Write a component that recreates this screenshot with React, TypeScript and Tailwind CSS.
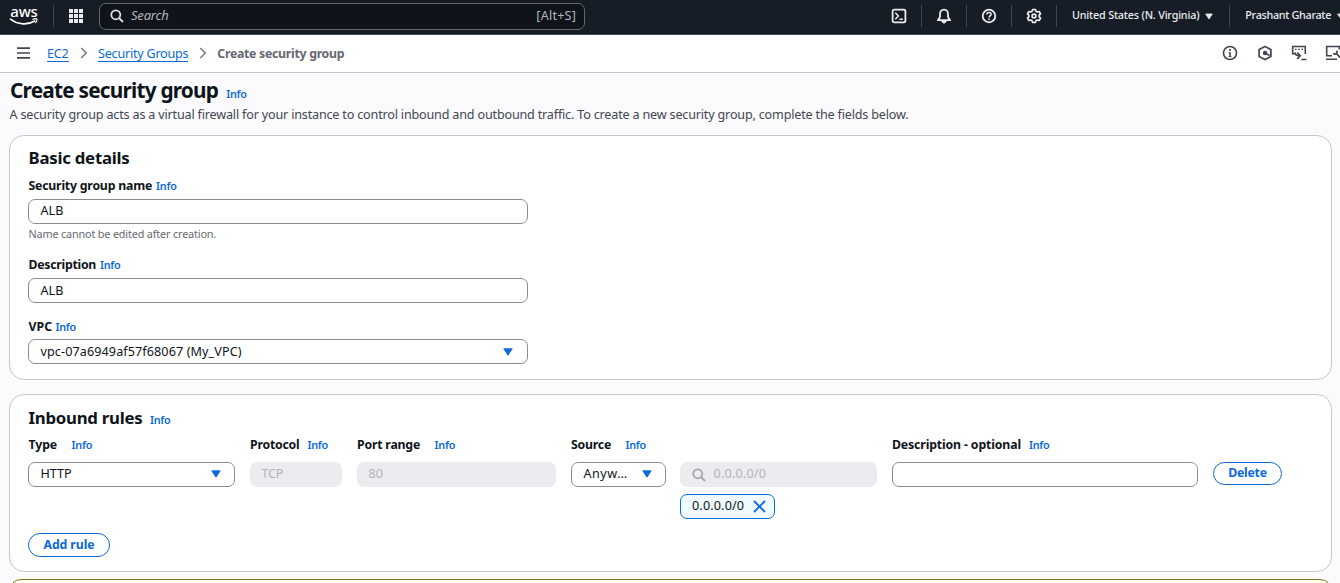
import type { ReactNode } from "react";

function Info({ className = "" }: { className?: string }) {
  return (
    <a className={`pt-px text-[10.8px] font-semibold tracking-[-0.27px] text-[#0b69d8] ${className}`}>
      Info
    </a>
  );
}

function Caret({ className = "" }: { className?: string }) {
  return (
    <svg width="10" height="8" viewBox="0 0 10 8" className={`shrink-0 ${className}`}>
      <path d="M0.8 0.8h8.4L5 7.2z" fill="currentColor" stroke="currentColor" strokeWidth="0.9" strokeLinejoin="round" />
    </svg>
  );
}

function SearchIcon({ className = "" }: { className?: string }) {
  return (
    <svg width="14" height="14" viewBox="0 0 14 14" fill="none" stroke="currentColor" strokeWidth="1.8" className={`shrink-0 ${className}`}>
      <circle cx="5.8" cy="5.8" r="4.5" />
      <path d="M9 9l4 4" />
    </svg>
  );
}

function Divider() {
  return <span className="h-[22px] w-px shrink-0 bg-[#424650]" />;
}

function NavIcon({ children }: { children: ReactNode }) {
  return (
    <span className="flex w-11 shrink-0 items-center justify-center">
      <svg width="16" height="16" viewBox="0 0 16 16" fill="none" stroke="#ebebf0" strokeWidth="1.8" strokeLinejoin="round">
        {children}
      </svg>
    </span>
  );
}

function TopBar() {
  return (
    <header className="flex h-[35px] shrink-0 items-center overflow-hidden border-b border-[#424650] bg-[#161d26] pb-[2px] text-[#ebebf0]">
      <div className="ml-[9px] flex w-[30px] shrink-0 flex-col items-center">
        <span className="h-[12px] text-[15px] leading-[11px] font-medium tracking-[-0.2px] text-white">aws</span>
        <svg width="30" height="8" viewBox="0 0 30 8" fill="none" stroke="#fff" strokeLinecap="round">
          <path d="M1.5 1.2C9 7 19 7.2 25.6 3" strokeWidth="1.7" />
          <path d="M23.8 1.2c2-.6 3.6-.6 4 0s-.2 2.2-1.3 3.5" strokeWidth="1.2" />
        </svg>
      </div>
      <span className="ml-[14px] flex"><Divider /></span>
      <svg width="14" height="14" viewBox="0 0 14 14" fill="currentColor" className="ml-[15px] shrink-0">
        {[0, 5, 10].map((y) =>
          [0, 5, 10].map((x) => <rect key={`${x}-${y}`} x={x} y={y} width="4" height="4" />)
        )}
      </svg>
      <div className="mt-px ml-4 flex h-[27px] w-[486px] shrink-0 items-center rounded-[7px] border border-[#656871] bg-[#0f141a] pr-2 pb-px pl-[10px] text-[#b4b4bb]">
        <SearchIcon className="text-[#dedee3]" />
        <span className="ml-[7px] text-[13px] tracking-[-0.2px] italic">Search</span>
        <span className="ml-auto text-[12.6px] tracking-[0.2px]">[Alt+S]</span>
      </div>
      <div className="ml-[292px] flex items-center">
        <NavIcon>
          <rect x="1.6" y="1.6" width="12.8" height="12.8" rx="1.6" />
          <path d="M4.3 4.8L7.4 8l-3.1 3.2M8.4 11.2h3.4" strokeWidth="1.5" />
        </NavIcon>
        <Divider />
        <NavIcon>
          <path d="M8 1.6c-2.6 0-4 1.9-4 4.3v3L1.9 12.2h12.2L12 8.9v-3c0-2.4-1.4-4.3-4-4.3z" />
          <path d="M5.3 13c.4 1.6 1.4 2.4 2.7 2.4s2.3-.8 2.7-2.4z" fill="#ebebf0" stroke="none" />
        </NavIcon>
        <Divider />
        <NavIcon>
          <circle cx="8" cy="8" r="6.3" />
          <path d="M5.9 6.6c0-1.3.9-2.1 2.1-2.1s2.1.8 2.1 1.9c0 1.5-2.1 1.5-2.1 3.1" strokeWidth="1.5" />
          <path d="M8 10.4v1.6" strokeWidth="1.6" />
        </NavIcon>
        <Divider />
        <NavIcon>
          <path d="M6.6 1.5h2.8l.5 1.8 1.3.7 1.9-.5 1.4 2.3L13.2 7.2v1.6l1.3 1.4-1.4 2.3-1.9-.5-1.3.7-.5 1.8H6.6l-.5-1.8-1.3-.7-1.9.5-1.4-2.3L2.8 8.8V7.2L1.5 5.8l1.4-2.3 1.9.5 1.3-.7z" strokeWidth="1.7" />
          <circle cx="8" cy="8" r="1.9" strokeWidth="1.7" />
        </NavIcon>
        <Divider />
        <span className="mb-px ml-[15px] text-[10.8px] font-medium tracking-[-0.19px] whitespace-nowrap">United States (N. Virginia)</span>
        <Caret className="ml-[6px] h-[7px] w-[8px]" />
        <span className="ml-[16px] flex"><Divider /></span>
        <span className="mb-px ml-[15px] text-[10.8px] font-medium tracking-[-0.31px] whitespace-nowrap">Prashant Gharate</span>
        <Caret className="ml-[6px] h-[7px] w-[8px]" />
      </div>
    </header>
  );
}

function Chevron() {
  return (
    <svg width="8" height="12" viewBox="0 0 8 12" fill="none" stroke="#7d8089" strokeWidth="1.7" className="shrink-0">
      <path d="M1.2 1l5 5-5 5" />
    </svg>
  );
}

function Breadcrumbs() {
  return (
    <nav className="flex h-[38px] shrink-0 items-center overflow-hidden border-b border-[#c6c6cd] bg-white pb-px text-[12.6px]">
      <svg width="13" height="12" viewBox="0 0 13 12" className="ml-[17px] shrink-0" stroke="#424650" strokeWidth="1.7">
        <path d="M0 1.2h13M0 6h13M0 10.8h13" />
      </svg>
      <a className="mt-px ml-[17px] h-[17px] border-b border-[#0b69d8] leading-[17px] tracking-[-0.2px] text-[#0b69d8]">EC2</a>
      <span className="ml-[11px] flex"><Chevron /></span>
      <a className="mt-px ml-[10.5px] h-[17px] border-b border-[#0b69d8] leading-[17px] tracking-[-0.24px] text-[#0b69d8]">Security Groups</a>
      <span className="ml-[10.5px] flex"><Chevron /></span>
      <span className="mt-[3px] ml-[10.5px] text-[12.3px] font-bold tracking-[-0.28px] text-[#656871]">Create security group</span>
      <div className="mr-[-1px] ml-auto flex shrink-0 items-center gap-[18px] text-[#424650]">
        <svg width="16" height="16" viewBox="0 0 16 16" fill="none" stroke="currentColor" strokeWidth="1.6">
          <circle cx="8" cy="8" r="6.5" />
          <path d="M8 4v2M8 7.2v4.8" strokeWidth="1.6" />
          <path d="M6.6 7.7H8M6.5 11.6h3" strokeWidth="0.9" />
        </svg>
        <svg width="16" height="16" viewBox="0 0 16 16" fill="none" stroke="currentColor" strokeWidth="1.7" className="ml-px">
          <path d="M8 1.4l5.9 3.1v7L8 14.6l-5.9-3.1v-7z" strokeLinejoin="round" />
          <circle cx="8" cy="8" r="2.2" fill="currentColor" stroke="none" />
          <path d="M8 8l4.6 2.6" />
        </svg>
        <svg width="16" height="16" viewBox="0 0 16 16" fill="none" stroke="currentColor" strokeWidth="1.6">
          <path d="M4 8.8H1.7V1.5h12.6V9M10.5 14.5H15.5" />
          <path d="M4 4.3h1.6M7.2 4.3h1.6M10.4 4.3H12" strokeWidth="1.3" />
          <path d="M4 7.5c0 2.3 1 3.2 4.8 3.2M6.2 7.5l3 3.2-3 3.2" strokeWidth="1.7" />
        </svg>
        <svg width="16" height="16" viewBox="0 0 16 16" fill="none" stroke="currentColor" strokeWidth="1.6">
          <path d="M7 10.7H1.7V1.5h12.6v3M1 14.3h11" />
          <path d="M15 12.4L11.8 9M8.3 8.4c1.8 1.5 4.2.4 3.7-2.7" strokeWidth="1.8" />
        </svg>
      </div>
    </nav>
  );
}

const field = "flex h-[25px] items-center rounded-[7px] border border-[#8c8c94] bg-white pl-[11.5px] text-[12.6px] text-[#0f141a]";
const disabled = "flex h-[25px] items-center rounded-[7px] bg-[#ebebf0] pl-[11.5px] text-[12.6px] text-[#b4b4bb]";
const label = "flex h-[18px] items-center text-[12.3px] font-bold whitespace-nowrap text-[#0f141a]";
const card = "ml-[9px] mr-2 flex shrink-0 flex-col rounded-[15px] border border-[#c6c6cd] bg-white pl-[18px]";
const button = "flex items-center justify-center rounded-full border border-[#0b69d8] text-[12.3px] font-bold text-[#0b69d8]";

function BasicDetails() {
  return (
    <section className={`${card} mt-[10px] h-[245px]`}>
      <h2 className="mt-[10px] ml-[0.5px] h-6 text-[16.8px] leading-6 font-bold tracking-[-0.24px] text-[#0f141a]">Basic details</h2>
      <div className={`${label} mt-[7px] ml-[0.5px] tracking-[-0.21px]`}>
        Security group name <Info className="ml-1" />
      </div>
      <div className={`${field} mt-1 w-[500px]`}>ALB</div>
      <p className="mt-[2px] ml-[0.5px] h-4 text-[10.8px] leading-4 tracking-[-0.146px] text-[#656871]">Name cannot be edited after creation.</p>
      <div className={`${label} mt-[14px] ml-[0.5px] tracking-[-0.27px]`}>
        Description <Info className="ml-1" />
      </div>
      <div className={`${field} mt-1 w-[500px] pt-px`}>ALB</div>
      <div className={`${label} mt-[15px] ml-[0.5px]`}>
        VPC <Info className="ml-[3.5px]" />
      </div>
      <div className={`${field} mt-[3px] w-[500px] justify-between pt-px pr-[14px]`}>
        <span className="tracking-[0.1px]">vpc-07a6949af57f68067 (My_VPC)</span>
        <Caret className="mb-px text-[#0b69d8]" />
      </div>
    </section>
  );
}

function InboundRules() {
  return (
    <section className={`${card} mt-[14px] h-[178px]`}>
      <div className="mt-[11px] ml-[0.5px] flex h-6 items-center">
        <h2 className="text-[16.8px] leading-6 font-bold tracking-[-0.25px] text-[#0f141a]">Inbound rules</h2>
        <Info className="mt-1 ml-[7.5px]" />
      </div>
      <div className="mt-[6px] flex items-start">
        <div className="w-[207px]">
          <div className={`${label} ml-[0.5px] tracking-[-0.1px]`}>Type <Info className="ml-[14.5px]" /></div>
          <div className={`${field} mt-2 justify-between pr-[13px]`}>HTTP<Caret className="mb-px text-[#0b69d8]" /></div>
        </div>
        <div className="ml-[15px] w-[92px]">
          <div className={`${label} tracking-[-0.22px]`}>Protocol <Info className="ml-2" /></div>
          <div className={`${disabled} mt-2 tracking-[-0.25px]`}>TCP</div>
        </div>
        <div className="ml-[15px] w-[199px]">
          <div className={`${label} tracking-[-0.2px]`}>Port range <Info className="ml-[14.5px]" /></div>
          <div className={`${disabled} mt-2`}>80</div>
        </div>
        <div className="ml-[15px] w-[306px]">
          <div className={`${label} tracking-[-0.23px]`}>Source <Info className="ml-[14.5px]" /></div>
          <div className="mt-2 flex items-start gap-[14px]">
            <div className={`${field} w-[95px] justify-between pr-[13px]`}>
              <span className="tracking-[0.5px]">Anyw…</span>
              <Caret className="mb-px text-[#0b69d8]" />
            </div>
            <div className="flex w-[197px] flex-col gap-[7px]">
              <div className={disabled}>
                <SearchIcon className="text-[#a4a4ad]" />
                <span className="ml-2 tracking-[0.19px]">0.0.0.0/0</span>
              </div>
              <div className="flex h-[25px] w-[95px] items-center rounded-[7px] border border-[#0b69d8] bg-[#f0fbff] pl-[11px] text-[12.6px] text-[#0f141a]">
                <span className="tracking-[0.15px]">0.0.0.0/0</span>
                <svg width="13" height="13" viewBox="0 0 13 13" stroke="#0b69d8" strokeWidth="1.8" className="mb-px ml-[8.5px] shrink-0">
                  <path d="M1 1l11 11M12 1L1 12" />
                </svg>
              </div>
            </div>
          </div>
        </div>
        <div className="ml-[15px] w-[306px]">
          <div className={`${label} tracking-[-0.14px]`}>Description - optional <Info className="ml-2" /></div>
          <div className={`${field} mt-2`} />
        </div>
        <button className={`${button} mt-[26px] ml-[15px] h-[23px] w-[69px] tracking-[-0.25px]`}>Delete</button>
      </div>
      <button className={`${button} mt-[14px] h-6 w-[82px] tracking-[-0.09px]`}>Add rule</button>
    </section>
  );
}

export default function App() {
  return (
    <div className="flex h-[583px] w-[1340px] flex-col overflow-hidden bg-[#fbfbfd] font-['Noto_Sans',sans-serif]">
      <TopBar />
      <Breadcrumbs />
      <div className="ml-[10px] flex h-[32px] shrink-0 items-center pt-[4px]">
        <h1 className="mb-[3px] text-[20.8px] leading-7 font-bold tracking-[-0.78px] text-[#0f141a]">Create security group</h1>
        <Info className="mt-[5px] ml-2" />
      </div>
      <p className="ml-[9.5px] h-5 shrink-0 text-[12.6px] leading-5 tracking-[-0.184px] whitespace-nowrap text-[#424650]">
        A security group acts as a virtual firewall for your instance to control inbound and outbound traffic. To create a new security group, complete the fields below.
      </p>
      <BasicDetails />
      <InboundRules />
      <div className="mt-[7px] mr-2 ml-[9px] h-10 shrink-0 rounded-[12px] border border-[#80741a] bg-[#fffef0]" />
    </div>
  );
}
